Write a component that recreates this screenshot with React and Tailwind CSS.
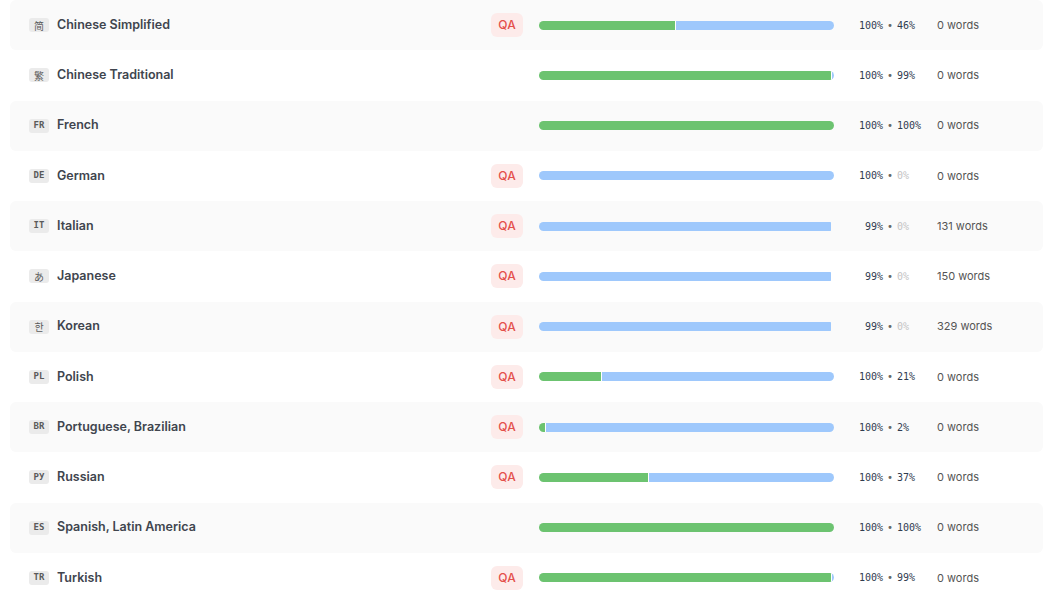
const languages = [
  { code: '简', name: 'Chinese Simplified', qa: true, translated: 100, approved: 46, words: 0 },
  { code: '繁', name: 'Chinese Traditional', qa: false, translated: 100, approved: 99, words: 0 },
  { code: 'FR', name: 'French', qa: false, translated: 100, approved: 100, words: 0 },
  { code: 'DE', name: 'German', qa: true, translated: 100, approved: 0, words: 0 },
  { code: 'IT', name: 'Italian', qa: true, translated: 99, approved: 0, words: 131 },
  { code: 'あ', name: 'Japanese', qa: true, translated: 99, approved: 0, words: 150 },
  { code: '한', name: 'Korean', qa: true, translated: 99, approved: 0, words: 329 },
  { code: 'PL', name: 'Polish', qa: true, translated: 100, approved: 21, words: 0 },
  { code: 'BR', name: 'Portuguese, Brazilian', qa: true, translated: 100, approved: 2, words: 0 },
  { code: 'РУ', name: 'Russian', qa: true, translated: 100, approved: 37, words: 0 },
  { code: 'ES', name: 'Spanish, Latin America', qa: false, translated: 100, approved: 100, words: 0 },
  { code: 'TR', name: 'Turkish', qa: true, translated: 100, approved: 99, words: 0 },
];

function ProgressBar({ translated, approved }) {
  const pending = translated - approved;
  return (
    <div className="flex h-[9px] w-[295px] overflow-hidden rounded-full">
      {approved > 0 ? <div className="h-full bg-[#6cc370]" style={{ width: `${approved}%` }} /> : null}
      {pending > 0 ? (
        <div
          className={`h-full bg-[#9ec8fc] ${approved > 0 ? 'border-l border-white' : ''}`}
          style={{ width: `${pending}%` }}
        />
      ) : null}
    </div>
  );
}

function LanguageRow({ lang, striped }) {
  const mono = lang.code.length === 2 && /[A-ZА-Я]/.test(lang.code);
  return (
    <div className={`flex h-[50.25px] items-center rounded-md pl-[19px] ${striped ? 'bg-[#fafafa]' : 'bg-white'}`}>
      <span
        className={`flex h-[14px] w-[20px] items-center justify-center rounded-[3px] bg-[#ebebeb] text-[#5a5a5a] ${
          mono ? "font-['DejaVu_Sans_Mono',monospace] text-[9px] font-bold" : "font-['Noto_Sans_CJK_SC',sans-serif] text-[10px]"
        }`}
      >
        {lang.code}
      </span>
      <span className="ml-[8px] flex-1 text-[12.5px] font-semibold text-[#40454e]">{lang.name}</span>
      <div className="w-[32px]">
        {lang.qa ? (
          <span className="flex h-[24px] w-[32px] items-center justify-center rounded-md bg-[#fdebea] text-[12px] font-medium text-[#e4504c]">
            QA
          </span>
        ) : null}
      </div>
      <div className="ml-[16px]">
        <ProgressBar translated={lang.translated} approved={lang.approved} />
      </div>
      <div className="ml-[23px] flex w-[80px] items-center font-['DejaVu_Sans_Mono',monospace] text-[10px] text-[#2f3b4f]">
        <span className="w-[26px] text-right">{lang.translated}%</span>
        <span className="mx-[4px] text-[#666]">•</span>
        <span className={lang.approved === 0 ? 'text-[#c4c4c4]' : ''}>{lang.approved}%</span>
      </div>
      <span className="w-[106px] text-[11px] text-[#555]">{lang.words} words</span>
    </div>
  );
}

export default function App() {
  return (
    <div className="min-h-screen bg-white pl-[10px] pr-[8px] font-['Inter',sans-serif]">
      {languages.map((lang, i) => (
        <LanguageRow key={lang.name} lang={lang} striped={i % 2 === 0} />
      ))}
    </div>
  );
}
